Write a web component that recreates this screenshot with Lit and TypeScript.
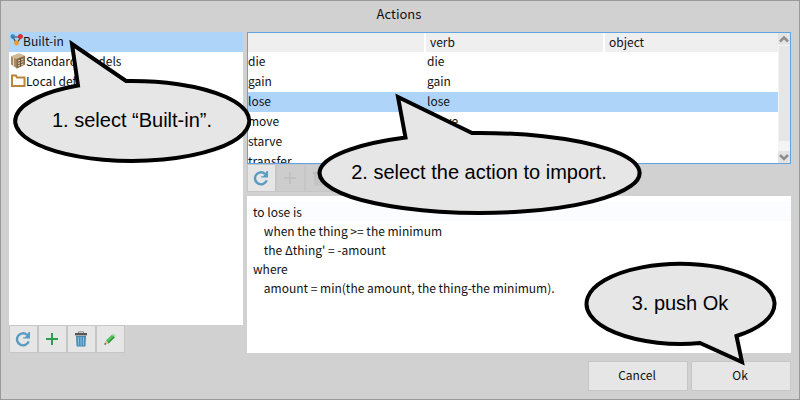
import { LitElement, html, css, svg, nothing } from "lit";
import { customElement, property, state } from "lit/decorators.js";
import { classMap } from "lit/directives/class-map.js";

const icons: Record<string, unknown> = {
  refresh: svg`<path d="M13.700 10.300A6 6 0 1 1 12 3.800" fill="none" stroke="#5a9bc2" stroke-width="2.400"/><path d="M15 1v6.600H8.200V6.200h2L13.800 1z" fill="#5a9bc2"/>`,
  plus: svg`<path d="M8 2v12M2 8h12" fill="none" stroke="#2ba04c" stroke-width="2"/>`,
  trash: svg`<path d="M5.500 2.200V.800h5v1.400" fill="none" stroke="#8d8d8d"/><path d="M2 2h12v2.400H2z" fill="#555"/><path d="M3 5h10l-.6 10.600H3.600z" fill="#4688b0"/><path d="M5.500 6v8.400M8 6v8.400M10.500 6v8.400" stroke="#86bfe0" stroke-width="1.200"/>`,
  pencil: svg`<path d="M2.600 13.600l1-3.800 2.800 2.800z" fill="#e9bd84"/><path d="M2.400 13.800l.5-2 1.500 1.500z" fill="#333"/><path d="M3.800 9.600L10 3.400l2.800 2.800-6.200 6.200z" fill="#4fc45c"/><path d="M5.600 11.400l6.200-6.200 1 1-6.200 6.200z" fill="#32933f"/><path d="M10 3.400l.8-.7q.7-.4 1.400.2l1.200 1.200q.6.7 0 1.300l-.6.8z" fill="#b4dcb2"/>`,
  graph: svg`<path d="M3 4l3.500 6.500L11 4z" fill="none" stroke="#444" stroke-width="1.200"/><circle cx="2.800" cy="3.600" r="2.300" fill="#3b86b9"/><circle cx="10.400" cy="3.400" r="2.500" fill="#d63434"/><circle cx="6.500" cy="10" r="2.400" fill="#f29a1f"/>`,
  box: svg`<path d="M1 3.500L9 .5l6 2.500v8.500L7 15.500l-6-4z" fill="#a98c66"/><path d="M1 3.500L9 .5l6 2.500-8.500 3z" fill="#d0b995"/><path d="M6.500 6L15 3v8.500l-8.500 4z" fill="#86694a"/><path d="M3.500 4.500v8.500M8 8l5.500-2M8 10.500l5.500-2M8 13l5.500-2" stroke="#e5d5b8" fill="none"/><path d="M10.500 5v8.500" stroke="#63503a"/>`,
  folder: svg`<path d="M2 4.500V2.500h4l1 2h7.500v8.500H2z" fill="none" stroke="#b9863f" stroke-width="2"/>`,
};

const icon = (name: string, width = 16, height = 16) =>
  html`<svg class="icon" width=${width} height=${height} viewBox="0 0 ${width} ${height}" aria-hidden="true">${icons[name]}</svg>`;

@customElement("tool-bar")
export class ToolBar extends LitElement {
  @property({ type: Array }) tools: { name: string; label: string; off?: boolean }[] = [];

  static styles = css`
    :host { display: flex; flex: none; }
    .tool {
      box-sizing: border-box; width: 29px; height: 28px; padding: 0 1px 0 0;
      display: flex; align-items: center; justify-content: center;
      background: #e6e6e6; border: 1px solid #c6c6c6;
    }
    .tool:disabled { background: #cdcdcd; }
    .tool:disabled .icon { filter: grayscale(1); opacity: 0.15; }
  `;

  render() {
    return this.tools.map(
      (t) => html`<button class="tool" aria-label=${t.label} ?disabled=${t.off}>${icon(t.name)}</button>`,
    );
  }
}

@customElement("speech-balloon")
export class SpeechBalloon extends LitElement {
  @property() outline = "";
  @property() view = "";
  @property() text = "";
  @property({ type: Number }) cx = 0;
  @property({ type: Number }) baseline = 0;

  static styles = css`
    :host { display: block; pointer-events: none; }
    .drawing { display: block; width: 100%; height: 100%; }
    .shape { fill: #e6e6e6; stroke: #000; stroke-width: 4px; stroke-linejoin: miter; stroke-miterlimit: 8; }
    .words { font: 20px "Liberation Sans", Arial, sans-serif; text-anchor: middle; fill: #000; }
  `;

  render() {
    return html`<svg class="drawing" viewBox=${this.view}>
      <path class="shape" d=${this.outline}></path>
      <text class="words" x=${this.cx} y=${this.baseline}>${this.text}</text>
    </svg>`;
  }
}

@customElement("app-root")
export class AppRoot extends LitElement {
  @state() private source = "Built-in";
  @state() private action = "lose";

  private sources = [
    { name: "Built-in", icon: "graph", width: 13 },
    { name: "Standard models", icon: "box", width: 16 },
    { name: "Local definitions", icon: "folder", width: 16 },
  ];
  private actions = ["die", "gain", "lose", "move", "starve", "transfer"];
  private code = `to lose is
    when the thing >= the minimum
    the Δthing' = -amount
where
    amount = min(the amount, the thing-the minimum).`;

  static styles = css`
    :host {
      display: block; color: #111;
      font: 12px/18px "Noto Sans CJK SC", "Noto Sans", sans-serif;
    }
    * { box-sizing: border-box; }
    button { font: inherit; color: inherit; }
    .window {
      position: relative; min-height: 100vh; display: flex; flex-direction: column;
      padding: 0 8px 8px; background: #d1d1d1; border: 1px solid #999;
    }
    .title { margin: 0; padding: 3px 2px 8px 0; font-size: 13px; font-weight: 400; line-height: 20px; text-align: center; }
    .panes { flex: 1; display: grid; grid-template-columns: 234px minmax(0, 1fr); gap: 4px; }
    .pane { display: flex; flex-direction: column; min-width: 0; }
    .sources { flex: 1; margin: 0; padding: 0; list-style: none; background: #fff; }
    .source {
      width: 100%; height: 20px; padding: 0 1px 2px; display: flex; align-items: center;
      border: 0; background: none; white-space: nowrap;
    }
    .source .icon { flex: none; }
    .source.picked, .picked { background: #afd4fa; }
    .list { height: 132px; display: flex; border: 1px solid #5ea3e4; background: #fff; }
    .clip { flex: 1; min-width: 0; overflow: hidden; }
    .table { width: 100%; table-layout: fixed; border-collapse: separate; border-spacing: 0; }
    .table td { height: 20px; padding: 0 0 2px; }
    .table td + td { padding-left: 3px; }
    .table th {
      height: 19px; padding: 0 4px 1px; font-weight: 400; text-align: left;
      background: #efefef;
    }
    .table th + th { border-left: 2px solid #fff; }
    .name { width: 176px; }
    .verb { width: 179px; }
    .scroll { flex: none; width: 12px; display: flex; flex-direction: column; background: #f4f4f4; }
    .arrow { height: 12px; padding: 0; border: 0; background: #e4e4e4; display: flex; justify-content: center; align-items: center; }
    .thumb { flex: none; height: 95px; margin: 1px 0 10px 1px; background: #e6e6e6; }
    .code {
      flex: 1; margin: 4px 0 0; padding: 6px; border: 0; background: linear-gradient(#fff 6px, #fbfcff 6px, #fbfcff 25px, #fff 25px);
      font: inherit; color: inherit; line-height: 19px; resize: none; outline: none; overflow: hidden;
    }
    .actions { display: flex; justify-content: flex-end; gap: 3px; padding-top: 8px; }
    .action { width: 100px; height: 30px; padding: 0 2px 2px 0; background: #e6e6e6; border: 1px solid #c6c6c6; }
    .balloon { position: absolute; }
    .first { left: 9px; top: 29px; width: 250px; height: 140px; }
    .second { left: 309px; top: 79px; width: 340px; height: 140px; }
    .third { right: 19px; bottom: 29px; width: 200px; height: 120px; }
  `;

  render() {
    const tools = [
      { name: "refresh", label: "Refresh" },
      { name: "plus", label: "Add" },
      { name: "trash", label: "Remove" },
      { name: "pencil", label: "Edit" },
    ];
    return html`<main class="window">
      <h1 class="title">Actions</h1>
      <div class="panes">
        <section class="pane">
          <ul class="sources">
            ${this.sources.map(
              (s) => html`<li><button class=${classMap({ source: true, picked: s.name === this.source })}
                @click=${() => (this.source = s.name)}>${icon(s.icon, s.width)}${s.name}</button></li>`,
            )}
          </ul>
          <tool-bar .tools=${tools}></tool-bar>
        </section>
        <section class="pane">
          <div class="list">
            <div class="clip">
              <table class="table">
                <colgroup><col class="name"><col class="verb"><col></colgroup>
                <thead><tr><th></th><th>verb</th><th>object</th></tr></thead>
                <tbody>
                  ${this.actions.map(
                    (a) => html`<tr class=${a === this.action ? "picked" : nothing} @click=${() => (this.action = a)}>
                      <td>${a}</td><td>${a}</td><td></td></tr>`,
                  )}
                </tbody>
              </table>
            </div>
            <div class="scroll">
              <button class="arrow" aria-label="Scroll up"><svg width="10" height="8" viewBox="0 0 10 8"><path d="M1 6.500l4-4 4 4" fill="none" stroke="#8e8e8e" stroke-width="2.500"/></svg></button>
              <div class="thumb"></div>
              <button class="arrow" aria-label="Scroll down"><svg width="10" height="8" viewBox="0 0 10 8"><path d="M1 2l4 4 4-4" fill="none" stroke="#8e8e8e" stroke-width="2.500"/></svg></button>
            </div>
          </div>
          <tool-bar .tools=${tools.map((t, i) => ({ ...t, off: i > 0 }))}></tool-bar>
          <textarea class="code" aria-label="Definition" spellcheck="false" .value=${this.code}></textarea>
        </section>
      </div>
      <div class="actions">
        <button class="action">Cancel</button>
        <button class="action">Ok</button>
      </div>
      <speech-balloon class="balloon first" view="10 30 250 140" cx="132" baseline="127" text="1. select “Built-in”."
        outline="M126 81A117 40 0 1 1 78 85.500L72 44Z"></speech-balloon>
      <speech-balloon class="balloon second" view="310 80 340 140" cx="479" baseline="179" text="2. select the action to import."
        outline="M472 133A160 40 0 1 1 405.500 137.500L398 97Z"></speech-balloon>
      <speech-balloon class="balloon third" view="580 250 200 120" cx="680" baseline="310" text="3. push Ok"
        outline="M700 343A94 40 0 1 1 736.500 336L742 362Z"></speech-balloon>
    </main>`;
  }
}
